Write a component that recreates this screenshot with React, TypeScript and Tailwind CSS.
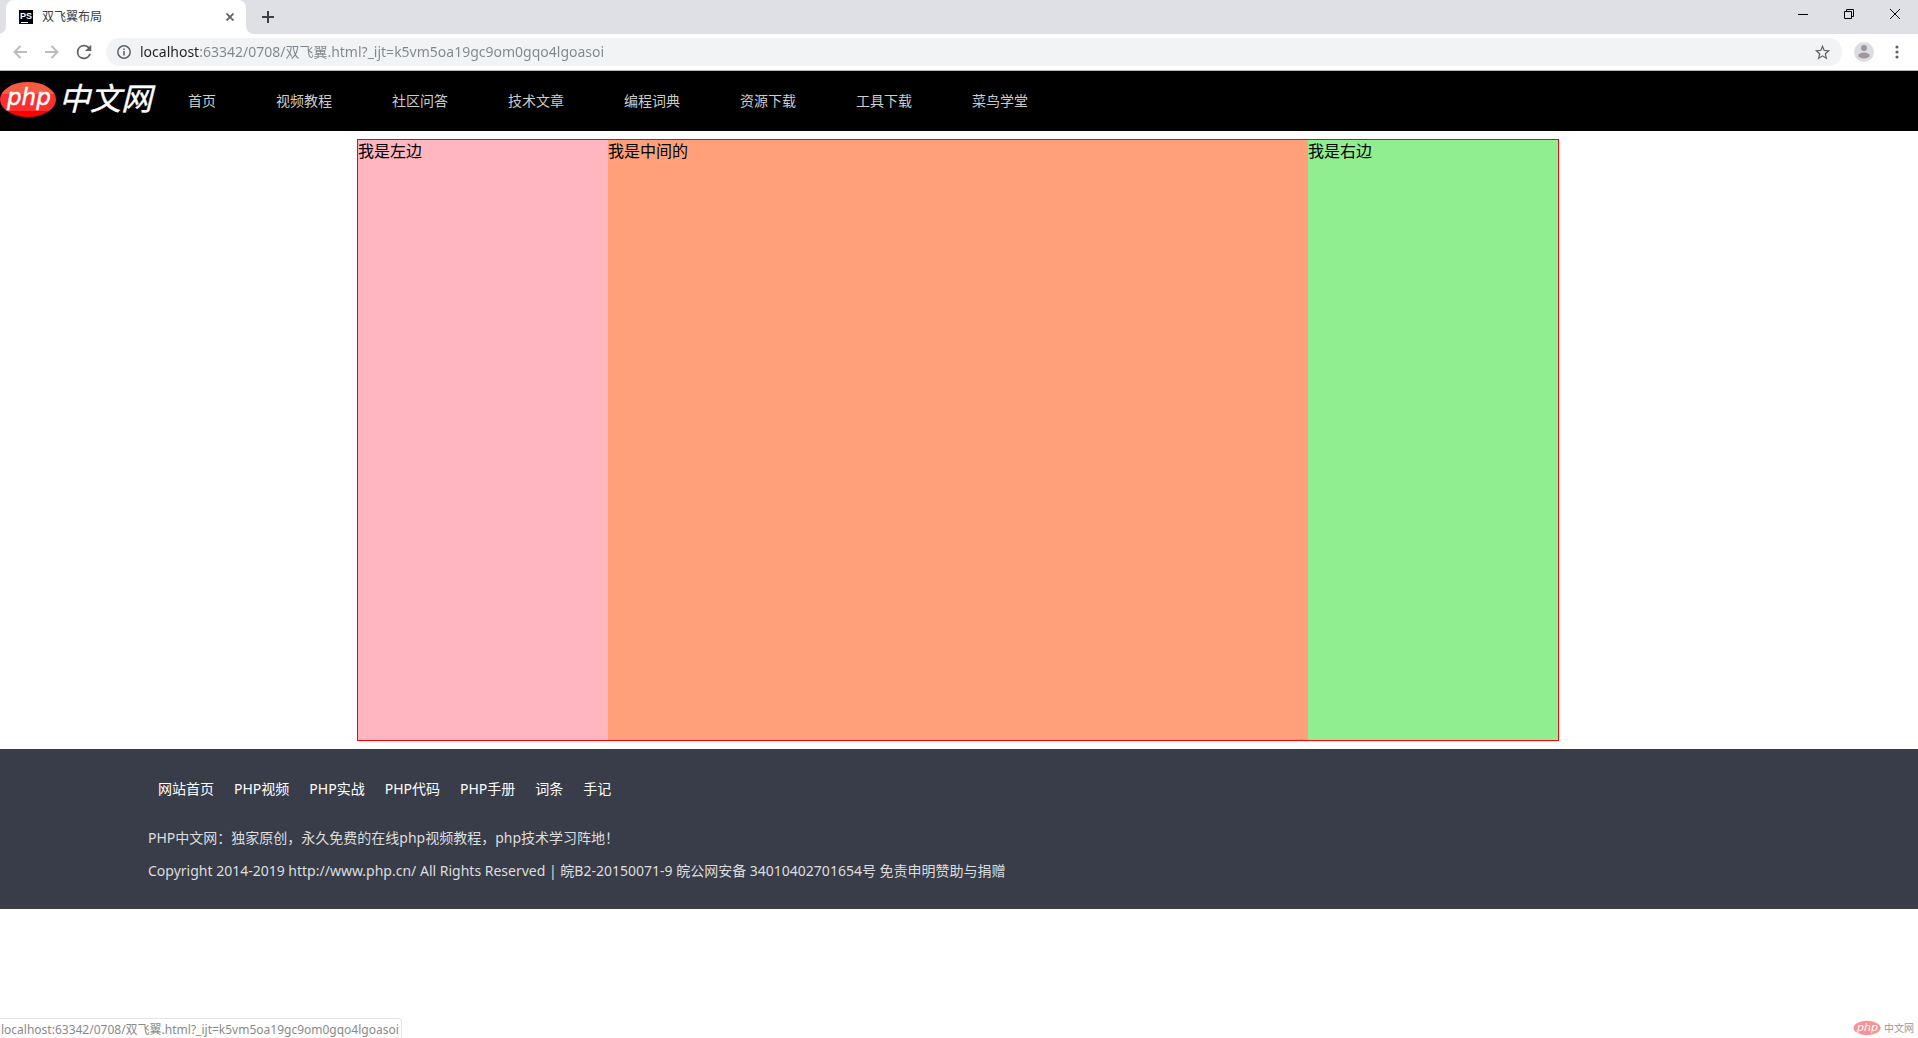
import React from "react";

const navItems = ["首页", "视频教程", "社区问答", "技术文章", "编程词典", "资源下载", "工具下载", "菜鸟学堂"];
const footerLinks = ["网站首页", "PHP视频", "PHP实战", "PHP代码", "PHP手册", "词条", "手记"];
const address = "localhost:63342/0708/双飞翼.html?_ijt=k5vm5oa19gc9om0gqo4lgoasoi";

function TabStrip() {
  return (
    <div className="flex h-[34px] items-stretch bg-[#dfe0e6]">
      <div className="flex w-[254px] items-stretch">
        <svg className="h-2 w-1.5 shrink-0 self-end" viewBox="2 0 6 8" aria-hidden="true">
          <path d="M8 0v8H0a8 8 0 0 0 8-8z" fill="#fff" />
        </svg>
        <div className="flex min-w-0 flex-1 items-center rounded-t-lg bg-white pl-[13px] pr-2">
          <svg className="size-3.5 shrink-0 bg-black" viewBox="0 0 14 14" aria-hidden="true">
            <text x="1" y="9" fontSize="9" fontWeight="700" fontFamily="Liberation Sans, sans-serif" fill="#fff">PS</text>
            <path d="M2 12.500h7" stroke="#fff" />
          </svg>
          <span className="ml-[9px] flex-1 text-xs text-[#3c4043]">双飞翼布局</span>
          <button type="button" aria-label="关闭标签页" className="p-1">
            <svg className="size-2" viewBox="0 0 8 8" stroke="#5f6368" strokeWidth="1.8" aria-hidden="true">
              <path d="M.5.5l7 7M7.500.5l-7 7" />
            </svg>
          </button>
        </div>
        <svg className="size-2 shrink-0 self-end" viewBox="0 0 8 8" aria-hidden="true">
          <path d="M0 0v8h8a8 8 0 0 1-8-8z" fill="#fff" />
        </svg>
      </div>
      <button type="button" aria-label="新标签页" className="grid w-7 place-items-center">
        <svg className="size-3" viewBox="0 0 12 12" stroke="#3c4043" strokeWidth="2" aria-hidden="true">
          <path d="M6 0v12M0 6h12" />
        </svg>
      </button>
      <div className="ml-auto flex h-7">
        <button type="button" aria-label="最小化" className="grid w-[46px] place-items-center">
          <svg className="size-2.5" viewBox="0 0 10 10" stroke="#000" aria-hidden="true"><path d="M0 5.500h10" /></svg>
        </button>
        <button type="button" aria-label="还原" className="grid w-[46px] place-items-center">
          <svg className="size-2.5" viewBox="0 0 10 10" stroke="#000" fill="none" aria-hidden="true">
            <path d="M.5 2.500h7v7h-7zM2.500 2V.5h7v7H8" />
          </svg>
        </button>
        <button type="button" aria-label="关闭" className="grid w-[46px] place-items-center">
          <svg className="size-2.5" viewBox="0 0 10 10" stroke="#000" aria-hidden="true"><path d="M0 0l10 10M10 0L0 10" /></svg>
        </button>
      </div>
    </div>
  );
}

function Toolbar() {
  return (
    <div className="flex h-[37px] items-center border-b border-[#b6b8b6] bg-white pl-1 pr-2">
      <button type="button" aria-label="后退" className="grid size-8 place-items-center">
        <svg className="size-3.5" viewBox="0 0 14 14" stroke="#babcbe" strokeWidth="2" fill="none" aria-hidden="true">
          <path d="M14 7H2M7.500 1L1.500 7l6 6" />
        </svg>
      </button>
      <button type="button" aria-label="前进" className="grid size-8 place-items-center">
        <svg className="size-3.5" viewBox="0 0 14 14" stroke="#babcbe" strokeWidth="2" fill="none" aria-hidden="true">
          <path d="M0 7h12M6.500 1l6 6-6 6" />
        </svg>
      </button>
      <button type="button" aria-label="重新加载" className="grid size-8 place-items-center">
        <svg className="size-5" viewBox="1 1 22 22" fill="#5f6368" aria-hidden="true">
          <path d="M17.650 6.350A7.960 7.960 0 0 0 12 4a8 8 0 1 0 7.730 10h-2.080A6 6 0 1 1 12 6c1.660 0 3.140.69 4.220 1.780L13 11h7V4z" />
        </svg>
      </button>
      <div className="ml-1.5 flex h-7 min-w-0 flex-1 items-center rounded-full bg-[#f1f3f4] px-[11px]">
        <svg className="size-3.5 shrink-0" viewBox="0 0 14 14" fill="none" stroke="#5f6368" aria-hidden="true">
          <circle cx="7" cy="7" r="6.200" strokeWidth="1.500" />
          <path d="M7 6v4.500M7 3.500V5" strokeWidth="1.600" />
        </svg>
        <input
          aria-label="地址栏"
          defaultValue={address}
          className="ml-[9px] h-[26px] min-w-0 flex-1 bg-linear-[to_right,#202124_60px,#80868b_60px] bg-clip-text pb-0.5 text-[14px] text-transparent outline-none"
        />
        <button type="button" aria-label="收藏">
          <svg className="size-[17px]" viewBox="1 1 22 22" fill="#5f6368" aria-hidden="true">
            <path d="M22 9.240l-7.190-.62L12 2 9.190 8.630 2 9.240l5.460 4.730L5.820 21 12 17.270 18.180 21l-1.630-7.030zM12 15.400l-3.760 2.270 1-4.280-3.320-2.880 4.380-.38L12 6.100l1.710 4.040 4.380.38-3.320 2.880 1 4.280z" />
          </svg>
        </button>
      </div>
      <button type="button" aria-label="用户" className="ml-3">
        <svg className="size-5" viewBox="0 0 20 20" aria-hidden="true">
          <circle cx="10" cy="10" r="10" fill="#dddde1" />
          <circle cx="10" cy="6" r="3" fill="#a0959c" />
          <ellipse cx="10" cy="13.500" rx="5.700" ry="3" fill="#a0959c" />
        </svg>
      </button>
      <button type="button" aria-label="菜单" className="ml-2.5 grid h-7 w-[26px] place-items-center">
        <svg className="h-3.5 w-1" viewBox="0 0 4 14" fill="#5f6368" aria-hidden="true">
          <circle cx="2" cy="2" r="1.600" /><circle cx="2" cy="7" r="1.600" /><circle cx="2" cy="12" r="1.600" />
        </svg>
      </button>
    </div>
  );
}

function Logo() {
  return (
    <a href="#" aria-label="php中文网" className="block w-[158px]">
      <svg className="h-[60px] w-[158px]" viewBox="0 0 158 60" aria-hidden="true">
        <defs>
          <linearGradient id="oval" x1="0" y1="0" x2="0" y2="1">
            <stop offset=".34" stopColor="#f55a42" />
            <stop offset=".34" stopColor="#fa2f2f" />
            <stop offset=".82" stopColor="#f9302f" />
            <stop offset=".82" stopColor="#ff0000" />
          </linearGradient>
        </defs>
        <ellipse cx="28" cy="28.500" rx="28" ry="17.500" fill="url(#oval)" />
        <text x="7" y="34" fontSize="23" fontStyle="italic" fontFamily="DejaVu Sans, sans-serif" fill="#fff" stroke="#fff" strokeWidth=".5">php</text>
        <text x="59" y="39" fontSize="31" fontStyle="italic" fontFamily="Noto Sans CJK SC, sans-serif" fill="#fff" stroke="#fff" strokeWidth=".4">中文网</text>
      </svg>
    </a>
  );
}

export default function App() {
  return (
    <div className="relative flex min-h-screen flex-col bg-white font-['Noto_Sans','Noto_Sans_CJK_SC',sans-serif]">
      <TabStrip />
      <Toolbar />
      <header className="flex h-[60px] items-center bg-black">
        <Logo />
        <nav className="flex">
          {navItems.map((t) => (
            <a key={t} href="#" className="px-[30px] text-[14px] leading-[60px] text-[#ccc]">{t}</a>
          ))}
        </nav>
      </header>
      <main className="py-2 pr-0.5">
        <div className="mx-auto flex h-[602px] max-w-[1202px] border border-[#f00] text-[16px] leading-[22px] text-black">
          <aside className="w-[250px] bg-[#ffb6c1]">我是左边</aside>
          <section className="flex-1 bg-[#ffa07a]">我是中间的</section>
          <aside className="w-[250px] bg-[#90ee90]">我是右边</aside>
        </div>
      </main>
      <footer className="h-40 bg-[#393d49] px-[148px] pt-5 text-[14px]">
        <nav className="flex leading-10">
          {footerLinks.map((t) => (
            <a key={t} href="#" className="px-2.5 text-white">{t}</a>
          ))}
        </nav>
        <div className="pt-3 leading-[33px] text-[#ddd]">
          <p>PHP中文网：独家原创，永久免费的在线php视频教程，php技术学习阵地！</p>
          <p>Copyright 2014-2019 http://www.php.cn/ All Rights Reserved | 皖B2-20150071-9 皖公网安备 34010402701654号 免责申明赞助与捐赠</p>
        </div>
      </footer>
      <div className="absolute bottom-0 left-0 h-5 rounded-tr border-r border-t border-[#e6e6e0] bg-white pl-px pr-0.5 text-xs leading-[22px] text-[#8a8a8a]">
        {address}
      </div>
      <svg className="absolute bottom-0.5 right-1 h-4 w-[61px]" viewBox="0 0 61 16" role="img" aria-label="php中文网">
        <ellipse cx="14" cy="8" rx="13.500" ry="7.200" fill="#f79394" />
        <text x="4" y="11" fontSize="11" fontStyle="italic" fontFamily="DejaVu Sans, sans-serif" fill="#fff">php</text>
        <text x="31" y="12" fontSize="10" fontFamily="Noto Sans CJK SC, sans-serif" fill="#999">中文网</text>
      </svg>
    </div>
  );
}
